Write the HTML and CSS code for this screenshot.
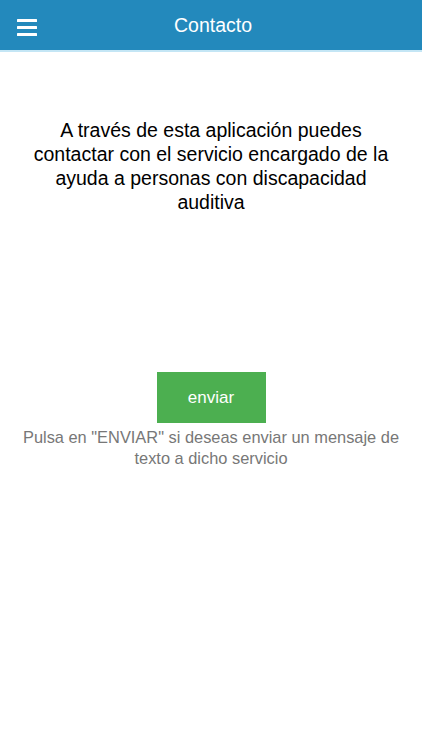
FILE: index.html
```html
<!DOCTYPE html>
<html lang="es">
<head>
    <meta charset="UTF-8">
    <meta name="viewport" content="width=device-width, initial-scale=1.0">
    <title>Contacto</title>
    <link rel="stylesheet" href="styles.css">
</head>
<body>
    <header class="top-bar">
        <button class="menu-btn" aria-label="Menú">
            <svg width="20" height="18" viewBox="0 0 20 18">
                <rect x="0" y="1" width="20" height="3" rx="0.5" fill="#fff"/>
                <rect x="0" y="8" width="20" height="3" rx="0.5" fill="#fff"/>
                <rect x="0" y="15" width="20" height="3" rx="0.5" fill="#fff"/>
            </svg>
        </button>
        <h1>Contacto</h1>
    </header>

    <main class="contact">
        <p class="intro">A través de esta aplicación puedes contactar con el servicio encargado de la ayuda a personas con discapacidad auditiva</p>

        <div class="send-box">
            <button class="send-btn" type="button">enviar</button>
            <p class="hint">Pulsa en "ENVIAR" si deseas enviar un mensaje de texto a dicho servicio</p>
        </div>
    </main>
</body>
</html>
```

FILE: styles.css
```css
body {
    font-family: "Liberation Sans", Arial, sans-serif;
    margin: 0;
    padding: 0;
    background-color: #fff;
}

.top-bar {
    position: relative;
    height: 50px;
    background-color: #2389bc;
    border-bottom: 2px solid #c4e6f5;
    display: flex;
    align-items: center;
    justify-content: center;
}
.top-bar h1 {
    margin: 0 0 0 4px;
    color: #fff;
    font-size: 19.5px;
    font-weight: normal;
}
.menu-btn {
    position: absolute;
    left: 17px;
    top: 18px;
    padding: 0;
    border: none;
    background: none;
    line-height: 0;
}

.contact {
    padding: 66px 16px 0;
    text-align: center;
}
.intro {
    margin: 0 auto;
    max-width: 380px;
    font-size: 19.5px;
    line-height: 24px;
    color: #000;
}

.send-box {
    margin-top: 158px;
}
.send-btn {
    width: 109px;
    height: 51px;
    background-color: #4caf50;
    color: #fff;
    font-family: inherit;
    font-size: 17px;
    border: none;
    cursor: pointer;
}
.hint {
    margin: 4px 0 0;
    font-size: 16.4px;
    line-height: 21px;
    color: #777;
}
```
